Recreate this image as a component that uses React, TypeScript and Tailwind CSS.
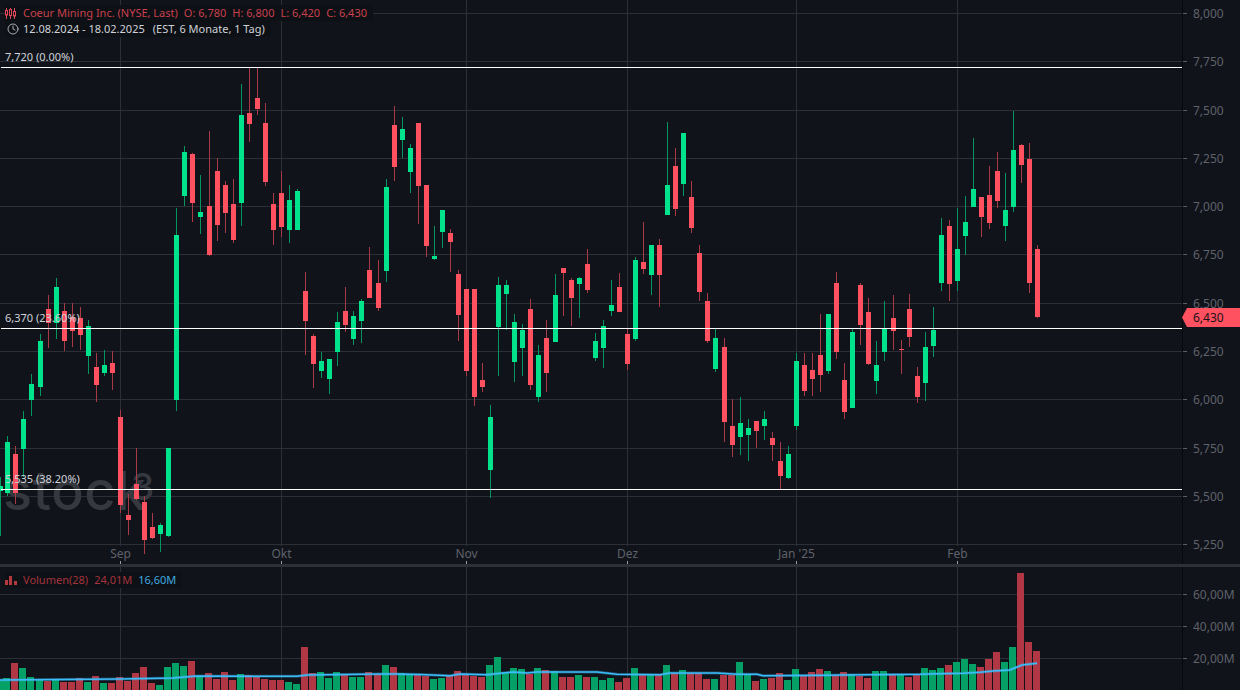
import { Clock } from "lucide-react";

// [dir, high, bodyTop, bodyBottom, low, volumeTop] - pixel rows read off the chart
type Candle = ["g" | "r", number, number, number, number, number];

const candles: Candle[] = [
  ["g", 477, 486, 491, 536, 360],
  ["g", 436, 442, 493, 496, 354],
  ["r", 446, 454, 493, 504, 309],
  ["g", 411, 419, 449, 477, 324],
  ["g", 374, 384, 400, 416, 351],
  ["g", 334, 341, 387, 396, 360],
  ["r", 295, 309, 323, 348, 363],
  ["g", 278, 287, 323, 339, 360],
  ["r", 303, 311, 341, 351, 366],
  ["r", 303, 317, 331, 347, 366],
  ["r", 307, 318, 335, 350, 354],
  ["g", 320, 326, 356, 374, 366],
  ["r", 353, 367, 385, 402, 348],
  ["g", 350, 365, 373, 376, 369],
  ["r", 351, 363, 373, 390, 369],
  ["r", 410, 417, 505, 513, 351],
  ["r", 494, 515, 520, 535, 363],
  ["r", 448, 484, 499, 500, 339],
  ["r", 496, 502, 540, 554, 321],
  ["r", 513, 527, 538, 539, 369],
  ["g", 523, 525, 534, 552, 375],
  ["g", 448, 448, 536, 537, 321],
  ["g", 208, 235, 400, 411, 309],
  ["g", 146, 152, 196, 206, 318],
  ["r", 153, 154, 203, 222, 303],
  ["g", 175, 212, 217, 234, 351],
  ["r", 131, 206, 255, 256, 339],
  ["r", 158, 171, 225, 241, 357],
  ["r", 181, 185, 213, 233, 336],
  ["r", 179, 204, 240, 243, 360],
  ["g", 84, 115, 203, 226, 342],
  ["r", 68, 113, 124, 142, 345],
  ["r", 68, 98, 109, 115, 351],
  ["r", 103, 123, 182, 186, 357],
  ["r", 193, 204, 230, 245, 360],
  ["r", 171, 193, 227, 237, 360],
  ["g", 185, 200, 230, 243, 366],
  ["g", 189, 191, 230, 230, 372],
  ["r", 272, 291, 321, 355, 261],
  ["r", 334, 336, 364, 388, 339],
  ["g", 352, 361, 371, 378, 336],
  ["g", 359, 359, 379, 394, 354],
  ["g", 312, 322, 352, 366, 336],
  ["r", 287, 311, 325, 332, 345],
  ["g", 311, 316, 339, 345, 351],
  ["g", 299, 301, 321, 343, 351],
  ["r", 247, 270, 298, 298, 336],
  ["r", 260, 283, 308, 311, 342],
  ["g", 179, 187, 271, 282, 315],
  ["r", 106, 125, 167, 181, 321],
  ["g", 117, 129, 140, 158, 339],
  ["g", 144, 148, 172, 193, 345],
  ["r", 123, 123, 186, 224, 345],
  ["r", 185, 185, 246, 257, 348],
  ["g", 226, 256, 259, 260, 357],
  ["g", 210, 210, 232, 248, 354],
  ["r", 229, 233, 242, 272, 348],
  ["r", 270, 274, 315, 341, 333],
  ["r", 289, 289, 371, 376, 345],
  ["r", 289, 289, 397, 406, 348],
  ["r", 363, 380, 387, 392, 351],
  ["g", 405, 417, 470, 498, 315],
  ["g", 277, 285, 327, 376, 291],
  ["g", 280, 285, 294, 330, 336],
  ["g", 314, 322, 362, 382, 324],
  ["g", 324, 330, 348, 376, 327],
  ["r", 299, 309, 385, 390, 342],
  ["g", 345, 355, 397, 402, 324],
  ["r", 320, 338, 373, 392, 330],
  ["g", 274, 295, 342, 342, 333],
  ["r", 268, 268, 273, 316, 351],
  ["r", 278, 280, 298, 326, 351],
  ["g", 277, 278, 284, 318, 345],
  ["r", 249, 264, 290, 293, 351],
  ["g", 333, 341, 358, 361, 351],
  ["g", 320, 326, 348, 368, 360],
  ["g", 280, 305, 311, 316, 354],
  ["r", 273, 287, 312, 312, 366],
  ["r", 328, 334, 364, 370, 354],
  ["g", 257, 260, 339, 341, 324],
  ["r", 222, 262, 269, 274, 345],
  ["g", 245, 245, 275, 295, 345],
  ["r", 239, 245, 275, 307, 345],
  ["g", 122, 185, 215, 215, 315],
  ["r", 148, 166, 209, 216, 339],
  ["g", 133, 133, 184, 196, 330],
  ["r", 181, 197, 228, 233, 339],
  ["r", 245, 253, 292, 301, 339],
  ["r", 293, 301, 341, 343, 357],
  ["g", 329, 338, 369, 372, 357],
  ["r", 338, 347, 422, 442, 345],
  ["r", 399, 426, 445, 457, 345],
  ["g", 397, 423, 437, 455, 306],
  ["g", 419, 428, 435, 461, 345],
  ["r", 421, 421, 431, 448, 363],
  ["g", 411, 419, 426, 440, 357],
  ["r", 432, 438, 445, 461, 354],
  ["r", 442, 461, 476, 489, 339],
  ["g", 446, 454, 478, 479, 360],
  ["g", 353, 361, 426, 430, 327],
  ["r", 353, 365, 391, 396, 348],
  ["r", 353, 370, 379, 396, 336],
  ["r", 314, 355, 375, 392, 327],
  ["g", 314, 314, 371, 374, 333],
  ["r", 272, 283, 352, 359, 345],
  ["r", 363, 380, 412, 419, 336],
  ["g", 329, 332, 408, 408, 342],
  ["r", 283, 285, 325, 345, 348],
  ["r", 298, 312, 364, 365, 354],
  ["g", 341, 365, 381, 394, 333],
  ["g", 301, 329, 352, 361, 333],
  ["r", 295, 318, 331, 350, 345],
  ["r", 340, 349, 350, 374, 345],
  ["r", 294, 309, 337, 347, 351],
  ["r", 367, 376, 397, 403, 345],
  ["g", 332, 347, 383, 401, 324],
  ["g", 307, 330, 346, 357, 330],
  ["g", 218, 235, 283, 291, 324],
  ["r", 220, 226, 284, 301, 315],
  ["g", 208, 249, 281, 291, 306],
  ["g", 196, 222, 236, 255, 297],
  ["g", 138, 189, 207, 207, 312],
  ["r", 197, 197, 217, 237, 321],
  ["r", 166, 195, 223, 229, 297],
  ["r", 152, 171, 201, 208, 276],
  ["g", 173, 210, 226, 241, 306],
  ["g", 111, 150, 207, 212, 261],
  ["r", 144, 145, 165, 183, 39],
  ["r", 143, 159, 283, 293, 246],
  ["r", 245, 249, 317, 318, 273],
];

const DOJI = 112;

// spacing is 8px with one extra pixel every 21 bars
const xOf = (i: number) =>
  i === 0 ? 0.5 : 7.5 + 8 * (i - 1) + [5, 26, 47, 69, 90, 111].filter((j) => i >= j).length;

const maLine =
  "0,680 120,679 173,678 197,676 297,676.3 307,675 380,674 397,674 420,674.5 450,675.7 460,674 487,674.7 513,672 527,673 537,672 597,672 617,674.3 660,674.7 670,673 717,673 737,674.3 757,674.3 763,675.7 827,675.3 840,675 920,674.3 937,673.7 963,673.3 980,672.3 993,671 1010,670 1022,665 1037,663.3";

const priceTicks = [
  { label: "8,000", y: 13 },
  { label: "7,750", y: 61 },
  { label: "7,500", y: 110 },
  { label: "7,250", y: 158 },
  { label: "7,000", y: 206 },
  { label: "6,750", y: 254 },
  { label: "6,500", y: 303 },
  { label: "6,250", y: 351 },
  { label: "6,000", y: 399 },
  { label: "5,750", y: 448 },
  { label: "5,500", y: 496 },
  { label: "5,250", y: 544 },
];
const volumeTicks = [
  { label: "60,00M", y: 594 },
  { label: "40,00M", y: 626 },
  { label: "20,00M", y: 658 },
];
const months = [
  { label: "Sep", x: 120 },
  { label: "Okt", x: 281 },
  { label: "Nov", x: 466 },
  { label: "Dez", x: 627 },
  { label: "Jan '25", x: 796 },
  { label: "Feb", x: 957 },
];
const fibLevels = [
  { label: "7,720 (0.00%)", y: 67 },
  { label: "6,370 (23.60%)", y: 328 },
  { label: "5,535 (38.20%)", y: 489 },
];

const GRID = "#2c2f36";

function CandleIcon() {
  return (
    <svg width="12" height="11" viewBox="0 0 12 11" fill="none" stroke="#e2475a" strokeWidth="1" className="block">
      <path d="M1.5 0v2M1.5 7v4M5.5 0v1M5.5 8v3M9.5 0v3M9.5 8v3" />
      <rect x="0.5" y="2.5" width="2" height="4.5" />
      <rect x="4.5" y="1.5" width="2" height="6" />
      <rect x="8.5" y="3.5" width="2" height="4.5" />
    </svg>
  );
}

function BarsIcon() {
  return (
    <svg width="12" height="9" viewBox="0 0 12 9" fill="#b5383f" className="block">
      <rect x="0" y="4" width="3" height="5" />
      <rect x="4" y="0" width="3" height="9" />
      <rect x="9" y="5" width="3" height="4" />
    </svg>
  );
}

function AxisTick({ label, y }: { label: string; y: number }) {
  return (
    <>
      <div className="absolute left-0 h-px w-1 bg-[#5b5e66]" style={{ top: y }} />
      <div className="absolute left-[10px] text-[12px] leading-4 text-[#5f626a]" style={{ top: y - 7.5 }}>
        {label}
      </div>
    </>
  );
}

function PricePane() {
  return (
    <div className="flex h-[564px]">
      <div className="relative w-[1182px]">
        <svg width="1182" height="564" viewBox="0 0 1182 564" shapeRendering="crispEdges" className="block">
          {priceTicks.map((t) => (
            <rect key={t.y} x="0" y={t.y} width="1182" height="1" fill={GRID} />
          ))}
          {months.map((m) => (
            <g key={m.x}>
              <rect x={m.x} y="0" width="1" height="564" fill={GRID} />
              <rect x={m.x} y="561" width="1" height="3" fill="#9a9ca3" />
            </g>
          ))}
          {/* stock3 watermark, sits under the candles */}
          <g shapeRendering="auto" fill="#35383e">
            <text x="3" y="510" fontFamily="Inter, sans-serif" fontSize="54" fontWeight="500" letterSpacing="0.6">
              stock
            </text>
            <text x="131" y="500" fontFamily="Inter, sans-serif" fontSize="37" fontWeight="500">
              3
            </text>
          </g>
          {candles.map(([dir, high, top, bottom, low], i) => {
            const x = xOf(i);
            return (
              <g key={i}>
                <rect
                  x={x - 0.5}
                  y={high}
                  width="1"
                  height={low - high}
                  fill={dir === "g" ? "#05955f" : "#a83a48"}
                />
                <rect
                  x={x - 2.5}
                  y={top}
                  width="5"
                  height={Math.max(bottom - top, 1)}
                  fill={dir === "g" ? "#00e38d" : "#ff5160"}
                />
              </g>
            );
          })}
          {fibLevels.map((f) => (
            <rect key={f.y} x="1" y={f.y} width="1181" height="1" fill="#ffffff" />
          ))}
        </svg>

        <div className="absolute left-[5px] top-[5px] flex h-4 items-center gap-[6px] bg-[#0d1014] pr-[6px] text-[11px] leading-4 text-[#c9404f]">
          <CandleIcon />
          <span>Coeur Mining Inc. (NYSE, Last)</span>
          <span>O: 6,780</span>
          <span>H: 6,800</span>
          <span>L: 6,420</span>
          <span>C: 6,430</span>
        </div>
        <div className="absolute left-[5px] top-[21px] flex h-4 items-center bg-[#0d1014] pr-[6px] text-[11px] leading-4 text-[#cfd2d8]">
          <Clock className="ml-[2px] mr-1 h-3 w-3" strokeWidth={1.6} />
          <span className="mr-2">12.08.2024 - 18.02.2025</span>
          <span>(EST, 6 Monate, 1 Tag)</span>
        </div>

        {fibLevels.map((f) => (
          <div
            key={f.label}
            className="absolute left-[5px] text-[11px] leading-4 text-[#d1d4da]"
            style={{ top: f.y - 18 }}
          >
            {f.label}
          </div>
        ))}

        {months.map((m) => (
          <div
            key={m.label}
            className="absolute top-[546px] -translate-x-1/2 bg-[#10131a] px-[2px] text-[12px] leading-[15px] text-[#5f626a]"
            style={{ left: m.x + 0.5 }}
          >
            {m.label}
          </div>
        ))}
      </div>

      <div className="relative flex-1 border-l border-[#07090c]">
        {priceTicks.map((t) => (
          <AxisTick key={t.y} label={t.label} y={t.y} />
        ))}
        <div className="absolute -left-px top-[308px] flex h-[19px] w-[58px] items-center">
          <svg width="5" height="19" viewBox="0 0 5 19" className="block">
            <path d="M5 0v19L0 9.5z" fill="#ff5160" />
          </svg>
          <div className="flex h-[19px] flex-1 items-center bg-[#ff5160] pl-[6px] text-[12px] text-[#1a1218]">
            6,430
          </div>
        </div>
      </div>
    </div>
  );
}

function VolumePane() {
  return (
    <div className="flex h-[123px]">
      <div className="relative w-[1182px]">
        <svg width="1182" height="123" viewBox="0 567 1182 123" shapeRendering="crispEdges" className="block">
          {volumeTicks.map((t) => (
            <rect key={t.y} x="0" y={t.y} width="1182" height="1" fill={GRID} />
          ))}
          {months.map((m) => (
            <rect key={m.x} x={m.x} y="567" width="1" height="123" fill={GRID} />
          ))}
          {candles.map(([dir, , , , , vol], i) => {
            const top = 560 + vol / 3;
            const green = dir === "g" || i === DOJI;
            return (
              <rect
                key={i}
                x={xOf(i) - 4.5}
                y={top}
                width="7"
                height={690 - top}
                fill={green ? "#04a065" : "#b13744"}
              />
            );
          })}
          <polyline
            points={maLine}
            fill="none"
            stroke="#38bdf8"
            strokeOpacity="0.35"
            strokeWidth="3"
            shapeRendering="auto"
          />
          <polyline points={maLine} fill="none" stroke="#3dbcfa" strokeWidth="1.5" shapeRendering="auto" />
        </svg>
        <div className="absolute left-[5px] top-[5px] flex h-4 items-center gap-[6px] bg-[#0d1014] pr-[6px] text-[11px] leading-4 text-[#a5343f]">
          <BarsIcon />
          <span>Volumen(28)</span>
          <span>24,01M</span>
          <span className="text-[#3fa9e0]">16,60M</span>
        </div>
      </div>
      <div className="relative flex-1 border-l border-[#07090c]">
        {volumeTicks.map((t) => (
          <AxisTick key={t.y} label={t.label} y={t.y - 567} />
        ))}
      </div>
    </div>
  );
}

export default function App() {
  return (
    <div className="flex h-[690px] w-[1240px] flex-col overflow-hidden bg-[#10131a] font-['Noto_Sans',sans-serif]">
      <PricePane />
      <div className="h-[3px] bg-[#2d3036]" />
      <VolumePane />
    </div>
  );
}
